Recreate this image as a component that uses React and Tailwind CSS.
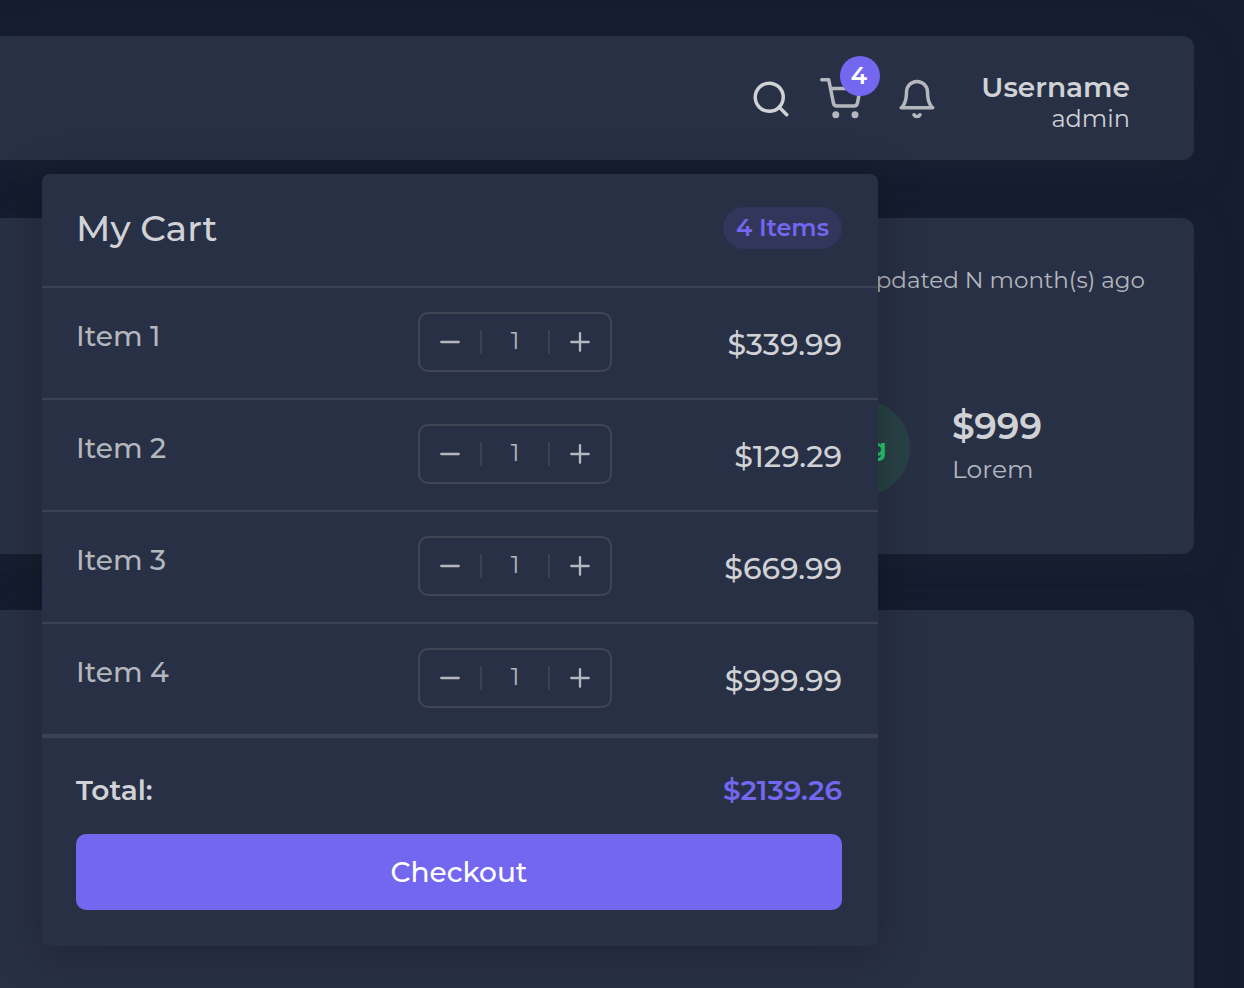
import { useState } from "react";

const items = [
  { name: "Item 1", price: "$339.99" },
  { name: "Item 2", price: "$129.29" },
  { name: "Item 3", price: "$669.99" },
  { name: "Item 4", price: "$999.99" },
];

function Icon({ children, className }) {
  return (
    <svg
      viewBox="0 0 24 24"
      className={className}
      fill="none"
      stroke="currentColor"
      strokeWidth="2"
      strokeLinecap="round"
      strokeLinejoin="round"
      aria-hidden="true"
    >
      {children}
    </svg>
  );
}

function Quantity({ name }) {
  const [count, setCount] = useState(1);
  return (
    <div className="flex h-[60px] w-[194px] items-center rounded-[10px] border-2 border-[#404656] text-[#b4b7bd]">
      <button
        type="button"
        aria-label={`Remove one ${name}`}
        className="flex h-full w-[60px] items-center justify-center"
        onClick={() => setCount(Math.max(1, count - 1))}
      >
        <Icon className="size-7">
          <path d="M4.5 12h15" />
        </Icon>
      </button>
      <input
        type="text"
        inputMode="numeric"
        aria-label={`Quantity of ${name}`}
        value={count}
        onChange={(e) => setCount(Number(e.target.value) || 1)}
        className="h-6 w-[70px] border-x-2 border-[#3b4253] bg-transparent pb-1 text-center text-2xl leading-5 outline-none"
      />
      <button
        type="button"
        aria-label={`Add one ${name}`}
        className="flex h-full w-[60px] items-center justify-center"
        onClick={() => setCount(count + 1)}
      >
        <Icon className="size-7">
          <path d="M12 4.5v15M4.5 12h15" />
        </Icon>
      </button>
    </div>
  );
}

function Cart() {
  return (
    <section
      aria-label="My Cart"
      className="absolute top-[138px] right-[316px] z-10 w-[836px] rounded-lg bg-[#283046] shadow-[0_8px_48px_rgba(0,0,0,0.26)]"
    >
      <header className="flex h-[114px] items-center justify-between border-b-2 border-[#3b4253] pr-9 pl-[34px] pb-1">
        <h2 className="text-[36px] leading-10 font-medium text-[#d0d2d6]">My Cart</h2>
        <span className="flex h-[42px] items-center rounded-full bg-[#31365a] px-[13px] text-2xl font-semibold text-[#7367f0]">
          4 Items
        </span>
      </header>
      <ul>
        {items.map((item) => (
          <li
            key={item.name}
            className="grid h-28 grid-cols-[342px_194px_1fr] items-center border-b-2 border-[#3b4253] pr-9 pb-[2px] pl-[34px] last:h-[114px] last:border-b-4"
          >
            <span className="pb-3 text-[28px] font-medium text-[#b4b7bd]">{item.name}</span>
            <Quantity name={item.name} />
            <span className="pt-1 text-right text-[30px] font-medium text-[#d0d2d6]">{item.price}</span>
          </li>
        ))}
      </ul>
      <footer className="pt-8 pr-9 pb-9 pl-[34px]">
        <div className="flex h-16 items-start justify-between text-[28px] leading-10 font-semibold">
          <span className="text-[#d0d2d6]">Total:</span>
          <span className="text-[#7367f0]">$2139.26</span>
        </div>
        <button
          type="button"
          className="h-[76px] w-full rounded-[10px] bg-[#7367f0] text-[28px] font-medium text-white"
        >
          Checkout
        </button>
      </footer>
    </section>
  );
}

export default function App() {
  return (
    <div className="min-h-screen overflow-hidden bg-[#161d31] pt-9 pr-[50px] font-['Montserrat','Inter',sans-serif]">
      <div className="relative">
        <nav className="flex h-[124px] items-center justify-end rounded-r-xl bg-[#283046] pt-[2px] pr-16 shadow-[0_8px_48px_rgba(34,41,47,0.24)]">
          <button type="button" aria-label="Search" className="mr-7 text-[#d0d2d6]">
            <Icon className="size-[42px]">
              <circle cx="11" cy="11" r="8" />
              <path d="m21 21-4.35-4.35" />
            </Icon>
          </button>
          <button type="button" aria-label="Cart, 4 items" className="relative mr-[34px] text-[#b4b7bd]">
            <Icon className="size-[42px]">
              <circle cx="9" cy="21" r="1" />
              <circle cx="20" cy="21" r="1" />
              <path d="M1 1h4l2.68 13.39a2 2 0 0 0 2 1.61h9.72a2 2 0 0 0 2-1.61L23 6H6" />
            </Icon>
            <span className="absolute -top-[22px] left-5 flex size-10 items-center justify-center rounded-full bg-[#7367f0] pr-[2px] text-2xl font-semibold text-white">
              4
            </span>
          </button>
          <button type="button" aria-label="Notifications" className="text-[#b4b7bd]">
            <Icon className="size-[42px]">
              <path d="M18 8A6 6 0 0 0 6 8c0 7-3 9-3 9h18s-3-2-3-9" />
              <path d="M13.73 21a2 2 0 0 1-3.46 0" />
            </Icon>
          </button>
          <div className="flex w-[192px] flex-col pt-2 text-right text-[#d0d2d6]">
            <span className="text-[28px] leading-8 font-semibold">Username</span>
            <span className="text-2xl leading-8">admin</span>
          </div>
        </nav>

        <section className="mt-[58px] flex h-[336px] flex-col items-end rounded-r-xl bg-[#283046] pt-11 pr-[49px] shadow-[0_8px_48px_rgba(34,41,47,0.24)]">
          <p className="text-[23px] leading-9 text-[#b4b7bd]">Updated N month(s) ago</p>
          <div className="mt-[102px] mr-[54px] flex items-center gap-[42px]">
            <div className="flex size-24 items-center justify-center rounded-full bg-[#284245] text-2xl font-bold text-[#28c76f]">
              img
            </div>
            <div className="w-[139px] pb-[5px]">
              <p className="text-[36px] leading-[46px] font-semibold text-[#d0d2d6]">$999</p>
              <p className="text-[25px] leading-10 text-[#b4b7bd]">Lorem</p>
            </div>
          </div>
        </section>

        <section className="mt-14 h-[420px] rounded-r-xl bg-[#283046] shadow-[0_8px_48px_rgba(34,41,47,0.24)]" />

        <Cart />
      </div>
    </div>
  );
}
